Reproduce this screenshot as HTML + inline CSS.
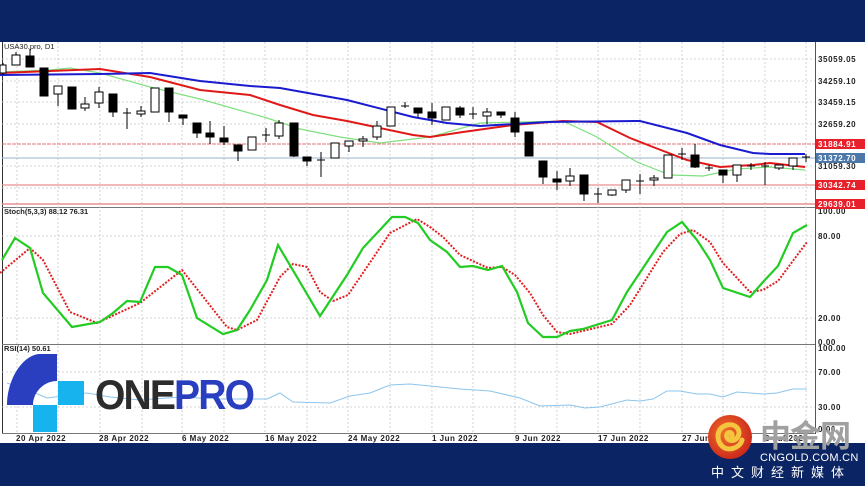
<!DOCTYPE html>
<html><head><meta charset="utf-8"><style>
html,body{margin:0;padding:0;background:#0b2463;}
svg{display:block}
</style></head><body>
<svg width="865" height="486" viewBox="0 0 865 486" xmlns="http://www.w3.org/2000/svg" font-family="Liberation Sans, sans-serif">
<rect width="865" height="486" fill="#0b2463"/>
<rect x="0" y="42" width="865" height="401" fill="#fff"/>
<!-- borders -->
<line x1="2.5" y1="42" x2="2.5" y2="434" stroke="#333" stroke-width="1"/>
<line x1="815.5" y1="42" x2="815.5" y2="434" stroke="#555" stroke-width="1"/>
<line x1="2" y1="207.5" x2="815" y2="207.5" stroke="#777"/>
<line x1="2" y1="344.5" x2="815" y2="344.5" stroke="#777"/>
<line x1="2" y1="433.5" x2="815" y2="433.5" stroke="#777"/>
<!-- vertical grid -->
<g stroke="#c8c8c8" stroke-dasharray="2,2" stroke-width="0.8">
<line x1="17" y1="42" x2="17" y2="433"/><line x1="58" y1="42" x2="58" y2="433"/><line x1="100" y1="42" x2="100" y2="433"/><line x1="142" y1="42" x2="142" y2="433"/><line x1="182" y1="42" x2="182" y2="433"/><line x1="224" y1="42" x2="224" y2="433"/><line x1="265" y1="42" x2="265" y2="433"/><line x1="307" y1="42" x2="307" y2="433"/><line x1="348" y1="42" x2="348" y2="433"/><line x1="390" y1="42" x2="390" y2="433"/><line x1="432" y1="42" x2="432" y2="433"/><line x1="473" y1="42" x2="473" y2="433"/><line x1="515" y1="42" x2="515" y2="433"/><line x1="557" y1="42" x2="557" y2="433"/><line x1="598" y1="42" x2="598" y2="433"/><line x1="640" y1="42" x2="640" y2="433"/><line x1="682" y1="42" x2="682" y2="433"/><line x1="723" y1="42" x2="723" y2="433"/><line x1="765" y1="42" x2="765" y2="433"/><line x1="806" y1="42" x2="806" y2="433"/>
<line x1="2" y1="59" x2="815" y2="59"/><line x1="2" y1="81" x2="815" y2="81"/><line x1="2" y1="102" x2="815" y2="102"/><line x1="2" y1="124" x2="815" y2="124"/><line x1="2" y1="166" x2="815" y2="166"/><line x1="2" y1="188" x2="815" y2="188"/>
<line x1="2" y1="236" x2="815" y2="236"/><line x1="2" y1="318" x2="815" y2="318"/>
<line x1="2" y1="372" x2="815" y2="372"/><line x1="2" y1="407" x2="815" y2="407"/>
</g>
<!-- level lines -->
<line x1="2" y1="144" x2="815" y2="144" stroke="#e07070" stroke-width="1" stroke-dasharray="4,1"/>
<line x1="2" y1="158" x2="815" y2="158" stroke="#9ab0c8" stroke-width="1"/>
<line x1="2" y1="185" x2="815" y2="185" stroke="#e89090" stroke-width="1.3"/>
<line x1="2" y1="204" x2="815" y2="204" stroke="#e89090" stroke-width="1.6"/>
<!-- MAs -->
<polyline fill="none" stroke="#7fe07f" stroke-width="1.2" points="0,72 50,70 70,68 100,73 150,87 200,99 267,118 300,129 340,137 380,143 430,137 480,123 563,121 597,137 630,158 637,162 670,175 703,176 737,169 770,167 805,170"/>
<polyline fill="none" stroke="#e01818" stroke-width="2" points="0,73 100,69 150,77 200,90 250,95 280,105 313,115 347,121 413,135 430,137 463,132 513,125 563,121 597,122 630,138 653,147 687,160 720,167 753,165 770,163 805,167"/>
<polyline fill="none" stroke="#1a1ad0" stroke-width="2" points="0,75 100,74 150,73 200,81 250,86 280,88 347,100 413,117 447,123 480,126 547,122 640,121 687,133 720,145 753,153 770,154 805,154"/>
<!-- candles -->
<g stroke="#000" stroke-width="1" id="c"></g>
<g stroke="#000" stroke-width="1">
<line x1="3" y1="63" x2="3" y2="75"/><rect x="0" y="65" width="6" height="8" fill="#fff"/>
<line x1="16" y1="52" x2="16" y2="65"/><rect x="12" y="55" width="8" height="10" fill="#fff"/>
<line x1="30" y1="49" x2="30" y2="67"/><rect x="26" y="56" width="8" height="11" fill="#000"/>
<rect x="40" y="68" width="8" height="28" fill="#000"/>
<line x1="58" y1="86" x2="58" y2="106"/><rect x="54" y="86" width="8" height="8" fill="#fff"/>
<rect x="68" y="87" width="8" height="22" fill="#000"/>
<line x1="85" y1="97" x2="85" y2="111"/><rect x="81" y="104" width="8" height="4" fill="#fff"/>
<line x1="99" y1="87" x2="99" y2="108"/><rect x="95" y="92" width="8" height="11" fill="#fff"/>
<line x1="113" y1="94" x2="113" y2="117"/><rect x="109" y="94" width="8" height="18" fill="#000"/>
<line x1="127" y1="108" x2="127" y2="129"/><line x1="123" y1="113" x2="131" y2="113"/>
<line x1="141" y1="106" x2="141" y2="117"/><rect x="137" y="111" width="8" height="3" fill="#fff"/>
<rect x="151" y="88" width="8" height="24" fill="#fff"/>
<line x1="169" y1="88" x2="169" y2="122"/><rect x="165" y="88" width="8" height="24" fill="#000"/>
<line x1="183" y1="115" x2="183" y2="125"/><rect x="179" y="115" width="8" height="3" fill="#000"/>
<line x1="197" y1="123" x2="197" y2="138"/><rect x="193" y="123" width="8" height="10" fill="#000"/>
<line x1="210" y1="121" x2="210" y2="144"/><rect x="206" y="133" width="8" height="4" fill="#000"/>
<line x1="224" y1="126" x2="224" y2="145"/><rect x="220" y="138" width="8" height="4" fill="#000"/>
<line x1="238" y1="145" x2="238" y2="161"/><rect x="234" y="145" width="8" height="6" fill="#000"/>
<rect x="248" y="137" width="8" height="13" fill="#fff"/>
<line x1="266" y1="128" x2="266" y2="142"/><line x1="262" y1="135" x2="270" y2="135"/>
<line x1="279" y1="120" x2="279" y2="139"/><rect x="275" y="123" width="8" height="13" fill="#fff"/>
<line x1="294" y1="123" x2="294" y2="157"/><rect x="290" y="123" width="8" height="33" fill="#000"/>
<line x1="307" y1="157" x2="307" y2="166"/><rect x="303" y="157" width="8" height="4" fill="#000"/>
<line x1="321" y1="152" x2="321" y2="177"/><line x1="317" y1="160" x2="325" y2="160"/>
<rect x="331" y="143" width="8" height="15" fill="#fff"/>
<line x1="349" y1="141" x2="349" y2="152"/><rect x="345" y="141" width="8" height="5" fill="#fff"/>
<line x1="363" y1="136" x2="363" y2="147"/><rect x="359" y="139" width="8" height="2" fill="#fff"/>
<line x1="377" y1="121" x2="377" y2="140"/><rect x="373" y="126" width="8" height="11" fill="#fff"/>
<rect x="387" y="107" width="8" height="19" fill="#fff"/>
<line x1="405" y1="102" x2="405" y2="108"/><line x1="401" y1="106" x2="409" y2="106"/>
<line x1="418" y1="108" x2="418" y2="117"/><rect x="414" y="108" width="8" height="5" fill="#000"/>
<line x1="432" y1="103" x2="432" y2="125"/><rect x="428" y="112" width="8" height="6" fill="#000"/>
<rect x="442" y="107" width="8" height="13" fill="#fff"/>
<line x1="460" y1="106" x2="460" y2="118"/><rect x="456" y="108" width="8" height="7" fill="#000"/>
<line x1="473" y1="107" x2="473" y2="119"/><line x1="469" y1="114" x2="477" y2="114"/>
<line x1="487" y1="108" x2="487" y2="124"/><rect x="483" y="112" width="8" height="4" fill="#fff"/>
<line x1="501" y1="112" x2="501" y2="118"/><rect x="497" y="112" width="8" height="3" fill="#000"/>
<line x1="515" y1="112" x2="515" y2="137"/><rect x="511" y="118" width="8" height="14" fill="#000"/>
<rect x="525" y="132" width="8" height="24" fill="#000"/>
<line x1="543" y1="161" x2="543" y2="184"/><rect x="539" y="161" width="8" height="16" fill="#000"/>
<line x1="557" y1="171" x2="557" y2="190"/><rect x="553" y="179" width="8" height="3" fill="#000"/>
<line x1="570" y1="168" x2="570" y2="186"/><rect x="566" y="176" width="8" height="5" fill="#fff"/>
<line x1="584" y1="175" x2="584" y2="201"/><rect x="580" y="175" width="8" height="19" fill="#000"/>
<line x1="598" y1="188" x2="598" y2="203"/><line x1="594" y1="194" x2="602" y2="194"/>
<line x1="612" y1="190" x2="612" y2="196"/><rect x="608" y="190" width="8" height="5" fill="#fff"/>
<line x1="626" y1="180" x2="626" y2="193"/><rect x="622" y="180" width="8" height="10" fill="#fff"/>
<line x1="640" y1="174" x2="640" y2="194"/><line x1="636" y1="181" x2="644" y2="181"/>
<line x1="654" y1="175" x2="654" y2="186"/><rect x="650" y="178" width="8" height="2" fill="#fff"/>
<rect x="664" y="155" width="8" height="23" fill="#fff"/>
<line x1="682" y1="148" x2="682" y2="160"/><line x1="678" y1="154" x2="686" y2="154"/>
<line x1="695" y1="144" x2="695" y2="168"/><rect x="691" y="155" width="8" height="12" fill="#000"/>
<line x1="709" y1="165" x2="709" y2="171"/><line x1="705" y1="168" x2="713" y2="168"/>
<line x1="723" y1="170" x2="723" y2="183"/><rect x="719" y="170" width="8" height="5" fill="#000"/>
<line x1="737" y1="165" x2="737" y2="182"/><rect x="733" y="165" width="8" height="10" fill="#fff"/>
<line x1="751" y1="163" x2="751" y2="170"/><line x1="747" y1="166" x2="755" y2="166"/>
<line x1="765" y1="162" x2="765" y2="185"/><line x1="761" y1="166" x2="769" y2="166"/>
<line x1="779" y1="165" x2="779" y2="170"/><rect x="775" y="165" width="8" height="3" fill="#fff"/>
<line x1="793" y1="158" x2="793" y2="170"/><rect x="789" y="158" width="8" height="8" fill="#fff"/>
<line x1="806" y1="154" x2="806" y2="162"/><line x1="802" y1="157" x2="810" y2="157"/>
</g>
<!-- stochastic -->
<polyline fill="none" stroke="#e02020" stroke-width="2" stroke-dasharray="2,1.5" points="0,273 30,248 43,260 70,312 97,323 140,303 182,270 227,327 237,330 257,320 280,277 293,264 307,267 320,292 333,301 348,295 390,233 417,219 430,227 443,237 460,255 488,268 502,267 515,275 530,293 543,315 557,332 570,334 612,324 630,305 663,252 680,234 693,230 710,242 723,263 750,292 763,290 778,281 807,242"/>
<polyline fill="none" stroke="#22cc22" stroke-width="2.2" points="2,260 15,238 30,248 43,293 72,327 100,322 113,313 127,301 140,302 155,267 168,267 182,275 197,318 223,334 237,330 250,310 267,280 278,245 320,316 347,275 363,248 392,217 405,217 418,223 430,240 447,252 460,267 473,266 488,270 502,266 517,292 528,323 543,337 557,337 570,331 583,329 612,320 627,292 647,262 667,232 682,222 697,240 710,260 723,288 750,297 763,282 778,266 793,233 807,225"/>
<!-- RSI -->
<polyline fill="none" stroke="#8cc4ec" stroke-width="1" points="7,383 33,392 47,398 87,393 110,397 140,400 180,397 220,399 267,399 280,393 293,402 330,403 350,396 370,393 390,385 410,384 430,386 460,389 490,391 520,398 540,406 570,405 585,408 600,407 627,400 640,401 653,399 667,391 680,391 697,394 710,394 723,397 737,392 763,394 777,393 793,389 807,389"/>
<!-- labels -->
<g font-size="7.5" fill="#222" font-weight="bold">
<text x="4" y="49" font-weight="normal" font-size="7.5">USA30.pro, D1</text>
<text x="4" y="214" font-size="7.5">Stoch(5,3,3) 88.12 76.31</text>
<text x="4" y="351" font-size="7.5">RSI(14) 50.61</text>
</g>
<g font-size="8" fill="#222" font-weight="bold" letter-spacing="0.6">
<text x="818" y="62">35059.05</text>
<text x="818" y="84">34259.10</text>
<text x="818" y="105">33459.15</text>
<text x="818" y="127">32659.20</text>
<text x="818" y="169">31059.30</text>
<text x="818" y="214">100.00</text>
<text x="818" y="239">80.00</text>
<text x="818" y="321">20.00</text>
<text x="818" y="345">0.00</text>
<text x="818" y="351">100.00</text>
<text x="818" y="375">70.00</text>
<text x="818" y="410">30.00</text>
<text x="818" y="432">0.00</text>
</g>
<g font-size="8" font-weight="bold" letter-spacing="0.6">
<rect x="816" y="139" width="49" height="10" fill="#e8202a"/><text x="818" y="147" fill="#fff">31884.91</text>
<rect x="816" y="153" width="49" height="10" fill="#4d77a8"/><text x="818" y="161" fill="#fff">31372.70</text>
<rect x="816" y="180" width="49" height="10" fill="#e8202a"/><text x="818" y="188" fill="#fff">30342.74</text>
<rect x="816" y="199" width="49" height="10" fill="#e8202a"/><text x="818" y="207" fill="#fff">29639.01</text>
</g>
<g font-size="8" fill="#222" font-weight="bold" letter-spacing="0.5">
<text x="16" y="441">20 Apr 2022</text>
<text x="99" y="441">28 Apr 2022</text>
<text x="182" y="441">6 May 2022</text>
<text x="265" y="441">16 May 2022</text>
<text x="348" y="441">24 May 2022</text>
<text x="432" y="441">1 Jun 2022</text>
<text x="515" y="441">9 Jun 2022</text>
<text x="598" y="441">17 Jun 2022</text>
<text x="682" y="441">27 Jun 2022</text>
<text x="765" y="441">6 Jul 2022</text>
</g>
<!-- ONEPRO logo -->
<path d="M7,405 C7,378 24,354 40,354 L57,354 L57,381 C44,381 33,392 33,405 Z" fill="#2a3ec0"/>
<rect x="58" y="381" width="26" height="24" fill="#17b3ee"/>
<rect x="33" y="405" width="24" height="27" fill="#17b3ee"/>
<text x="95" y="409" font-size="42" font-weight="bold" letter-spacing="-2" transform="translate(95,0) scale(0.93,1) translate(-95,0)"><tspan fill="#2c2c2c">ONE</tspan><tspan fill="#2a3ec0">PRO</tspan></text>
<!-- cngold logo -->
<defs><radialGradient id="g" cx="0.4" cy="0.4" r="0.7"><stop offset="0" stop-color="#f0702a"/><stop offset="1" stop-color="#c8201a"/></radialGradient></defs>
<circle cx="730" cy="437" r="22" fill="url(#g)"/>
<path d="M722,446 C716,440 716,428 727,425 C737,423 742,432 737,438 C733,443 725,440 727,434 C729,431 733,433 732,436 M722,446 C728,452 740,448 742,440" fill="none" stroke="#f6c540" stroke-width="5" stroke-linecap="round"/>
<text x="760" y="447" font-size="31" font-weight="bold" fill="#a0a0a0" font-family="Noto Sans CJK SC, sans-serif" letter-spacing="-1">中金网</text>
<text x="760" y="461" font-size="11" fill="#fff" letter-spacing="0.3">CNGOLD.COM.CN</text>
<text x="711" y="477" font-size="13" fill="#fff" font-family="Noto Sans CJK SC, sans-serif" letter-spacing="7">中文财经新媒体</text>
</svg>
</body></html>
